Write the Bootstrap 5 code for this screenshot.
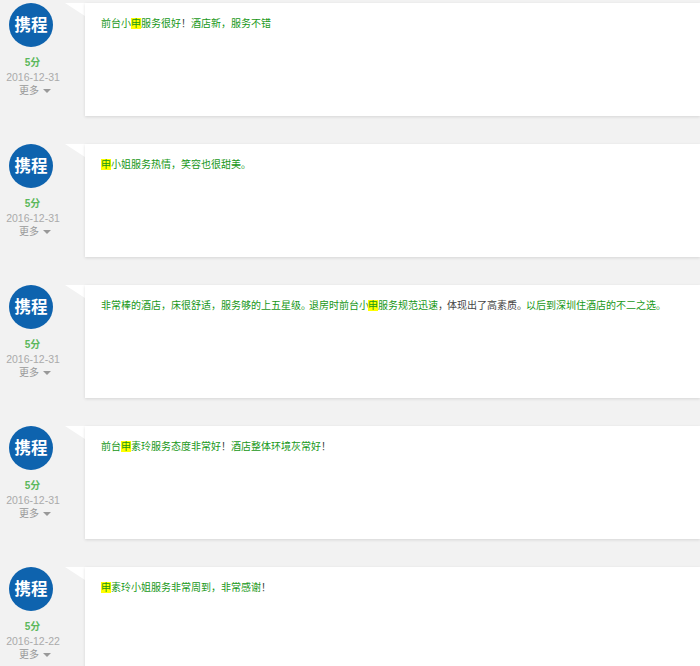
<!DOCTYPE html>
<html lang="zh">
<head>
<meta charset="utf-8">
<title>点评</title>
<link rel="stylesheet" href="https://cdn.jsdelivr.net/npm/bootstrap@5.3.0/dist/css/bootstrap.min.css">
<style>
html,body{height:666px;overflow:hidden}
body{background:#f2f2f2;font-family:"Liberation Sans","Noto Sans CJK SC",sans-serif;}
.rv-item{height:141px;padding-top:3px}
.rv-side{width:65px;flex:none}
.rv-logo{width:44px;height:44px;border-radius:50%;background:#0e63ae;color:#fff;font-size:16.5px;font-weight:700;margin:0 0 0 9px;line-height:44px;text-align:center;white-space:nowrap}
.rv-score{width:65px;text-align:center;color:#5cb85c;font-size:10px;font-weight:700;line-height:14px;margin-top:9px}
.rv-date{width:66px;text-align:center;color:#aaa;font-size:10.5px;line-height:14px;margin-top:0}
.rv-more{width:65px;padding-left:5px;text-align:center;color:#999;font-size:10px;line-height:13px;margin-top:0}
.rv-caret{display:inline-block;border-left:4px solid transparent;border-right:4px solid transparent;border-top:4px solid #999;margin-left:4px;vertical-align:middle}
.rv-tri{width:20px;height:113px;flex:none}
.rv-tri svg{display:block}
.rv-body{height:113px;flex:1 1 auto;background:#fff;box-shadow:0 1px 3px rgba(0,0,0,.12);padding:14px 16px;font-size:10px;line-height:14px;color:#179717;white-space:nowrap}
.rv-hl{background:#ff0}
.rv-blk{color:#444}
.rv-nar{letter-spacing:-2px}
.rv-nar1{letter-spacing:-1px}
</style>
</head>
<body>
<div class="rv-list">
  <div class="rv-item d-flex">
    <div class="rv-side"><div class="rv-logo">携程</div><div class="rv-score">5分</div><div class="rv-date">2016-12-31</div><div class="rv-more">更多<span class="rv-caret"></span></div></div>
    <div class="rv-tri"><svg width="20" height="14"><polygon points="0,0 20,0 20,13" fill="#fff"/></svg></div>
    <div class="rv-body">前台小<span class="rv-hl">申</span>服务很好<span class="rv-blk">！</span>酒店新，服务不错</div>
  </div>
  <div class="rv-item d-flex">
    <div class="rv-side"><div class="rv-logo">携程</div><div class="rv-score">5分</div><div class="rv-date">2016-12-31</div><div class="rv-more">更多<span class="rv-caret"></span></div></div>
    <div class="rv-tri"><svg width="20" height="14"><polygon points="0,0 20,0 20,13" fill="#fff"/></svg></div>
    <div class="rv-body"><span class="rv-hl">申</span>小姐服务热情，笑容也很甜美。</div>
  </div>
  <div class="rv-item d-flex">
    <div class="rv-side"><div class="rv-logo">携程</div><div class="rv-score">5分</div><div class="rv-date">2016-12-31</div><div class="rv-more">更多<span class="rv-caret"></span></div></div>
    <div class="rv-tri"><svg width="20" height="14"><polygon points="0,0 20,0 20,13" fill="#fff"/></svg></div>
    <div class="rv-body">非常棒的酒店，床很舒适，服务够的上五星级<span class="rv-nar">。</span>退房时前台<span class="rv-nar1">小</span><span class="rv-hl">申</span>服务规范迅速<span class="rv-blk"><span class="rv-nar1">，</span>体现出了高素质<span class="rv-nar1">。</span></span>以后到深圳住酒店的不二之选。</div>
  </div>
  <div class="rv-item d-flex">
    <div class="rv-side"><div class="rv-logo">携程</div><div class="rv-score">5分</div><div class="rv-date">2016-12-31</div><div class="rv-more">更多<span class="rv-caret"></span></div></div>
    <div class="rv-tri"><svg width="20" height="14"><polygon points="0,0 20,0 20,13" fill="#fff"/></svg></div>
    <div class="rv-body">前台<span class="rv-hl">申</span>素玲服务态度非常好<span class="rv-blk">！</span>酒店整体环境灰常好<span class="rv-blk">！</span></div>
  </div>
  <div class="rv-item d-flex">
    <div class="rv-side"><div class="rv-logo">携程</div><div class="rv-score">5分</div><div class="rv-date">2016-12-22</div><div class="rv-more">更多<span class="rv-caret"></span></div></div>
    <div class="rv-tri"><svg width="20" height="14"><polygon points="0,0 20,0 20,13" fill="#fff"/></svg></div>
    <div class="rv-body"><span class="rv-hl">申</span>素玲小姐服务非常周到，非常感谢<span class="rv-blk">！</span></div>
  </div>
</div>
</body>
</html>
